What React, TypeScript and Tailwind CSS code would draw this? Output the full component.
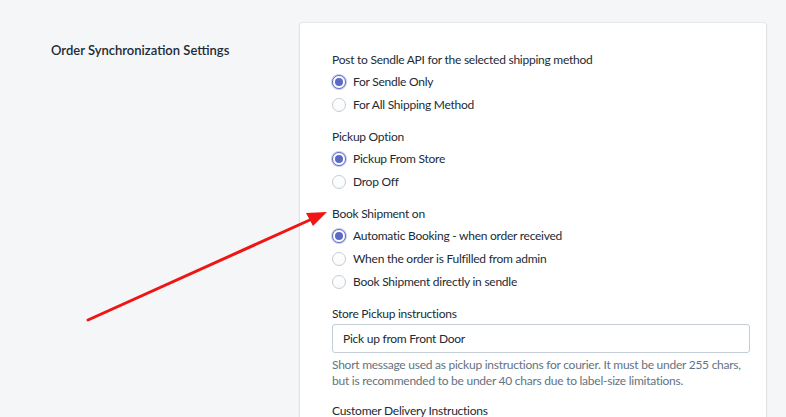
import React from 'react';

const font = { fontFamily: '"Segoe UI", Lato, "Noto Sans", sans-serif' };

function Radio({ label, checked }: { label: string; checked?: boolean }) {
  return (
    <label className="flex items-center h-[23px] gap-[7px] text-[12px] tracking-[-0.25px] text-[#212b36]">
      {checked ? (
        <span className="w-[14px] h-[14px] rounded-full border border-[#5c6ac4] bg-white flex items-center justify-center shadow-[0_0_0_1px_rgba(92,106,196,0.35)]">
          <span className="w-[8px] h-[8px] rounded-full bg-[#5c6ac4]" />
        </span>
      ) : (
        <span className="w-[14px] h-[14px] rounded-full border border-[#c4cdd5] bg-gradient-to-b from-white to-[#f9fafb]" />
      )}
      <span>{label}</span>
    </label>
  );
}

function Group({ title, options }: { title: string; options: { label: string; checked?: boolean }[] }) {
  return (
    <div className="flex flex-col">
      <div className="text-[12px] tracking-[-0.25px] text-[#212b36] h-[21px] leading-[21px]">{title}</div>
      {options.map((o) => (
        <Radio key={o.label} {...o} />
      ))}
    </div>
  );
}

export default function App() {
  return (
    <div className="relative w-[786px] h-[417px] overflow-hidden bg-[#f4f6f8]" style={font}>
      <div className="flex pt-[23px]">
        <div className="w-[300px] pl-[51px] pt-[17px]">
          <h2 className="text-[13px] font-semibold text-[#212b36] leading-[20px]">Order Synchronization Settings</h2>
        </div>
        <div className="w-[466px] bg-white rounded-[3px] shadow-[0_0_0_1px_rgba(63,63,68,0.05),0_1px_3px_0_rgba(63,63,68,0.15)] pl-[32px] pr-[16px] pt-[26px] pb-[20px] flex flex-col gap-[10px]">
          <Group
            title="Post to Sendle API for the selected shipping method"
            options={[{ label: 'For Sendle Only', checked: true }, { label: 'For All Shipping Method' }]}
          />
          <Group
            title="Pickup Option"
            options={[{ label: 'Pickup From Store', checked: true }, { label: 'Drop Off' }]}
          />
          <Group
            title="Book Shipment on"
            options={[
              { label: 'Automatic Booking - when order received', checked: true },
              { label: 'When the order is Fulfilled from admin' },
              { label: 'Book Shipment directly in sendle' },
            ]}
          />
          <div className="flex flex-col">
            <div className="text-[12px] tracking-[-0.25px] text-[#212b36] h-[21px] leading-[21px]">Store Pickup instructions</div>
            <div className="h-[29px] border border-[#c4cdd5] rounded-[3px] px-[10px] flex items-center text-[12px] tracking-[-0.25px] text-[#212b36]">
              Pick up from Front Door
            </div>
            <p className="mt-[4px] text-[12px] tracking-[-0.25px] leading-[16px] text-[#637381]">
              Short message used as pickup instructions for courier. It must be under 255 chars, but is recommended to be under 40 chars due to label-size limitations.
            </p>
            <div className="mt-[11px] text-[12px] tracking-[-0.25px] text-[#212b36] h-[21px] leading-[21px]">Customer Delivery Instructions</div>
          </div>
        </div>
      </div>
      <svg className="absolute left-0 top-0 pointer-events-none" width="786" height="417">
        <line x1="88" y1="320" x2="312" y2="219" stroke="#f01414" strokeWidth="3" strokeLinecap="round" />
        <polygon points="327,212 306,213 313,226" fill="#f01414" />
      </svg>
    </div>
  );
}
